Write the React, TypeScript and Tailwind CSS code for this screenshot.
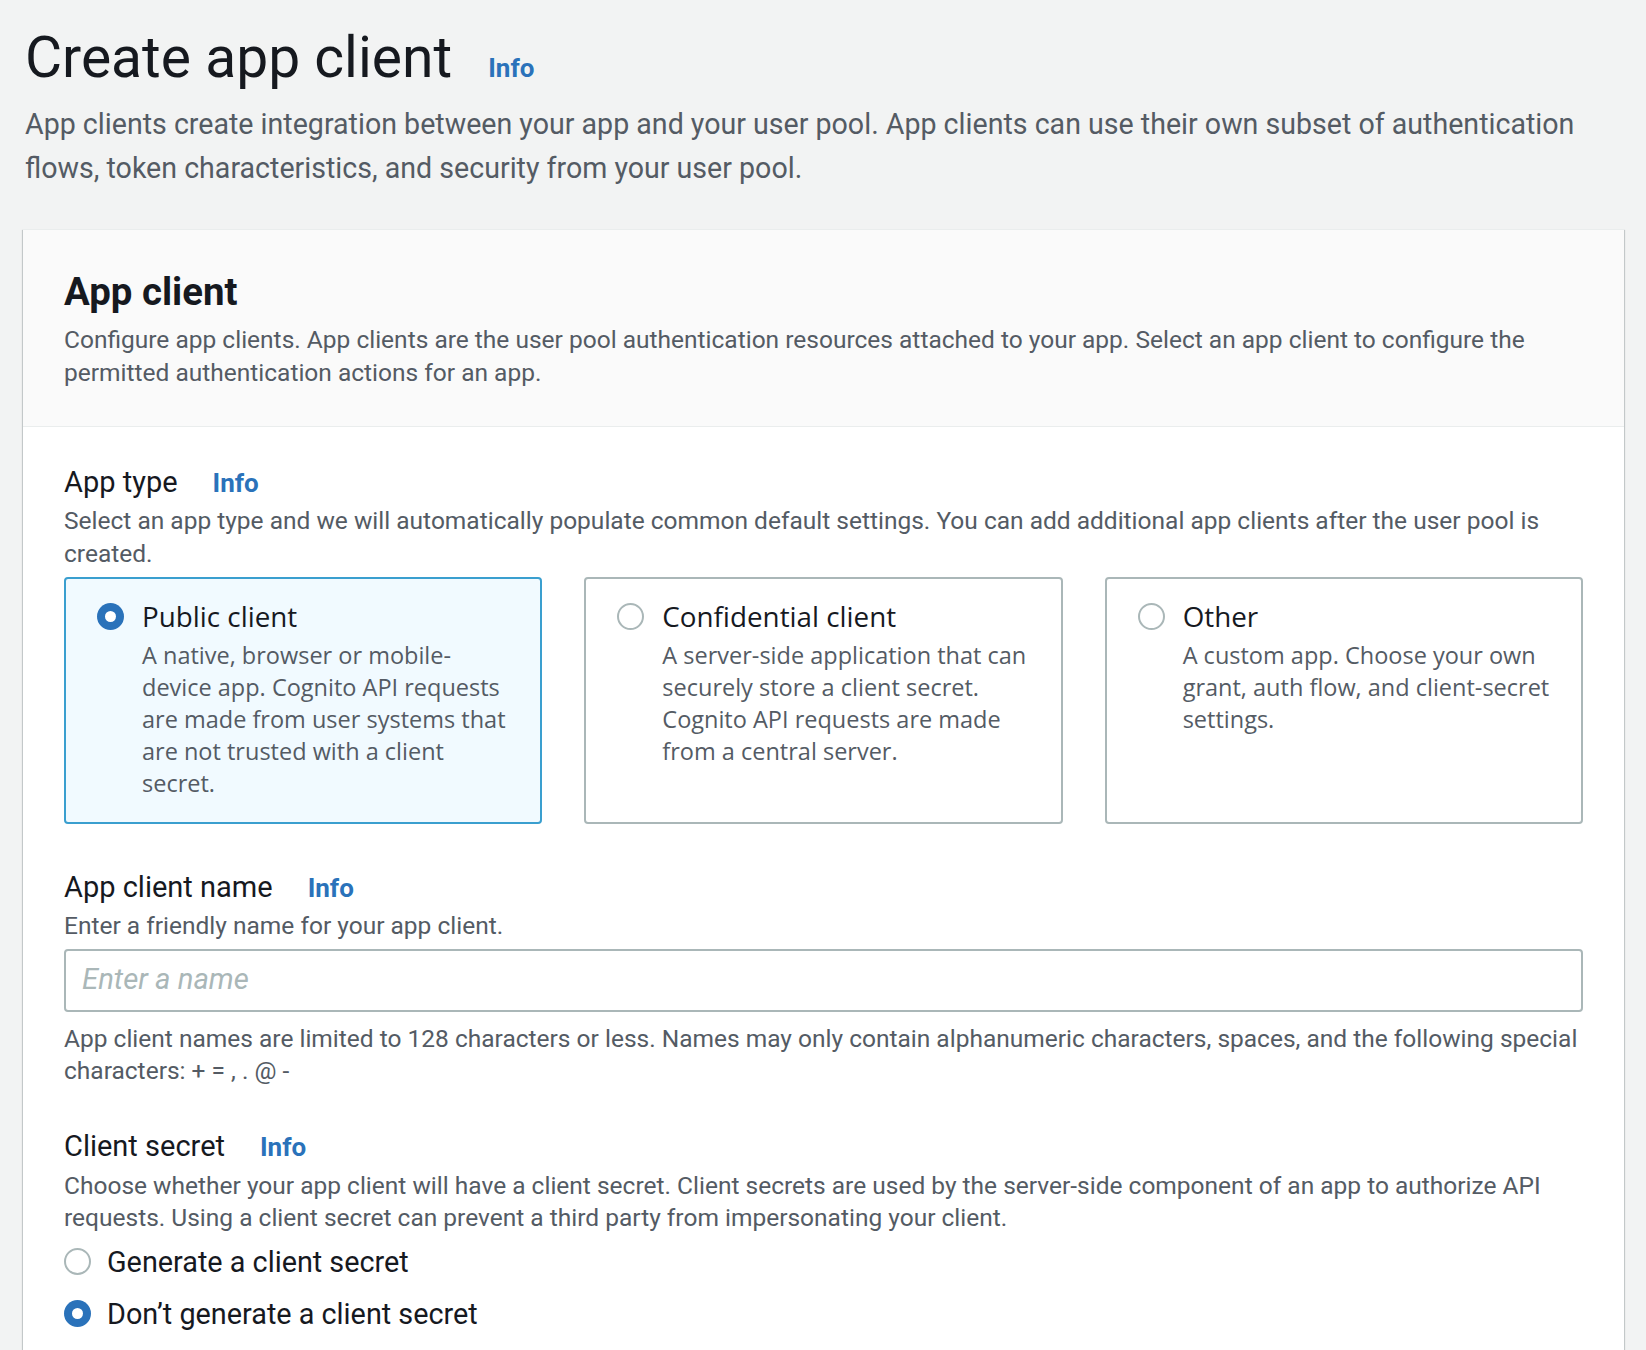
import React from "react";

const font = { fontFamily: "Roboto, 'Noto Sans', sans-serif" };

function Radio({ checked }: { checked: boolean }) {
  return checked ? (
    <div className="w-[27px] h-[27px] shrink-0 rounded-full bg-[#2a72ba] flex items-center justify-center">
      <div className="w-[11px] h-[11px] rounded-full bg-white" />
    </div>
  ) : (
    <div className="w-[27px] h-[27px] shrink-0 rounded-full border-2 border-[#aab7b8] bg-white" />
  );
}

function Info({ className = "" }: { className?: string }) {
  return (
    <span className={"font-bold text-[26px] text-[#2a72ba] leading-none " + className}>Info</span>
  );
}

function Lines({ lines }: { lines: string[] }) {
  return (
    <>
      {lines.map((l, i) => (
        <span key={i} className="block whitespace-nowrap">
          {l}
        </span>
      ))}
    </>
  );
}

function Tile({
  checked,
  title,
  lines,
}: {
  checked: boolean;
  title: string;
  lines: string[];
}) {
  return (
    <div
      className={
        "rounded-[4px] border-2 pl-[31px] pr-[20px] pt-[19px] pb-[23px] " +
        (checked ? "border-[#3a9fcf] bg-[#f1faff]" : "border-[#aab7b8] bg-white")
      }
      style={{ fontFamily: "'Open Sans', 'Noto Sans', sans-serif" }}
    >
      <div className="flex items-center gap-[18px]">
        <Radio checked={checked} />
        <div className="text-[27.8px] leading-[36px] text-[#16191f]">{title}</div>
      </div>
      <div className="ml-[45px] mt-[5px] text-[23.5px] leading-[32px] text-[#545b64]">
        <Lines lines={lines} />
      </div>
    </div>
  );
}

function Label({ text }: { text: string }) {
  return (
    <div className="flex items-baseline">
      <span className="text-[29px] leading-[36px] text-[#16191f]">{text}</span>
      <Info className="ml-[35px]" />
    </div>
  );
}

const desc = "text-[24.5px] leading-[32.5px] text-[#545b64]";

export default function App() {
  return (
    <div className="min-h-screen bg-[#f2f3f3] overflow-hidden" style={font}>
      <div className="pl-[25px] pr-[40px] pt-[24px]">
        <div className="flex items-baseline">
          <h1 className="text-[57px] leading-[68px] font-normal text-[#16191f]">Create app client</h1>
          <Info className="ml-[36px]" />
        </div>
        <p className="mt-[10px] text-[28.6px] leading-[44px] text-[#545b64]">
          <Lines
            lines={[
              "App clients create integration between your app and your user pool. App clients can use their own subset of authentication",
              "flows, token characteristics, and security from your user pool.",
            ]}
          />
        </p>
      </div>

      <div className="ml-[23px] mr-[22px] mt-[39px] bg-white border-t border-[#eaeded] shadow-[0_1px_1px_0_rgba(0,28,36,0.3),1px_1px_1px_0_rgba(0,28,36,0.15),-1px_1px_1px_0_rgba(0,28,36,0.15)]">
        <div className="bg-[#fafafa] border-b border-[#eaeded] px-[41px] pt-[40px] pb-[37px]">
          <h2 className="text-[38.4px] leading-[44px] font-bold text-[#16191f]">App client</h2>
          <p className={"mt-[10px] " + desc}>
            <Lines
              lines={[
                "Configure app clients. App clients are the user pool authentication resources attached to your app. Select an app client to configure the",
                "permitted authentication actions for an app.",
              ]}
            />
          </p>
        </div>

        <div className="px-[41px] pt-[37px] pb-[40px]">
          <Label text="App type" />
          <p className={"mt-[5px] " + desc}>
            <Lines
              lines={[
                "Select an app type and we will automatically populate common default settings. You can add additional app clients after the user pool is",
                "created.",
              ]}
            />
          </p>
          <div className="mt-[7px] grid grid-cols-3 gap-[42px]">
            <Tile
              checked
              title="Public client"
              lines={[
                "A native, browser or mobile-",
                "device app. Cognito API requests",
                "are made from user systems that",
                "are not trusted with a client",
                "secret.",
              ]}
            />
            <Tile
              checked={false}
              title="Confidential client"
              lines={[
                "A server-side application that can",
                "securely store a client secret.",
                "Cognito API requests are made",
                "from a central server.",
              ]}
            />
            <Tile
              checked={false}
              title="Other"
              lines={[
                "A custom app. Choose your own",
                "grant, auth flow, and client-secret",
                "settings.",
              ]}
            />
          </div>

          <div className="mt-[45px]">
            <Label text="App client name" />
          </div>
          <p className={"mt-[5px] " + desc}>Enter a friendly name for your app client.</p>
          <div className="mt-[6px] h-[63px] rounded-[4px] border-2 border-[#aab7b8] bg-white flex items-center pl-[16px]">
            <span className="italic text-[29.3px] text-[#aab7b8]">Enter a name</span>
          </div>
          <p className={"mt-[11px] " + desc}>
            <Lines
              lines={[
                "App client names are limited to 128 characters or less. Names may only contain alphanumeric characters, spaces, and the following special",
                "characters: + = , . @ -",
              ]}
            />
          </p>

          <div className="mt-[40px]">
            <Label text="Client secret" />
          </div>
          <p className={"mt-[6px] " + desc}>
            <Lines
              lines={[
                "Choose whether your app client will have a client secret. Client secrets are used by the server-side component of an app to authorize API",
                "requests. Using a client secret can prevent a third party from impersonating your client.",
              ]}
            />
          </p>
          <div className="mt-[9px] flex flex-col gap-[16px]">
            <div className="flex items-center gap-[16px]">
              <Radio checked={false} />
              <span className="text-[28.8px] leading-[36px] text-[#16191f]">Generate a client secret</span>
            </div>
            <div className="flex items-center gap-[16px]">
              <Radio checked />
              <span className="text-[28.8px] leading-[36px] text-[#16191f]">Don’t generate a client secret</span>
            </div>
          </div>
        </div>
      </div>
    </div>
  );
}
